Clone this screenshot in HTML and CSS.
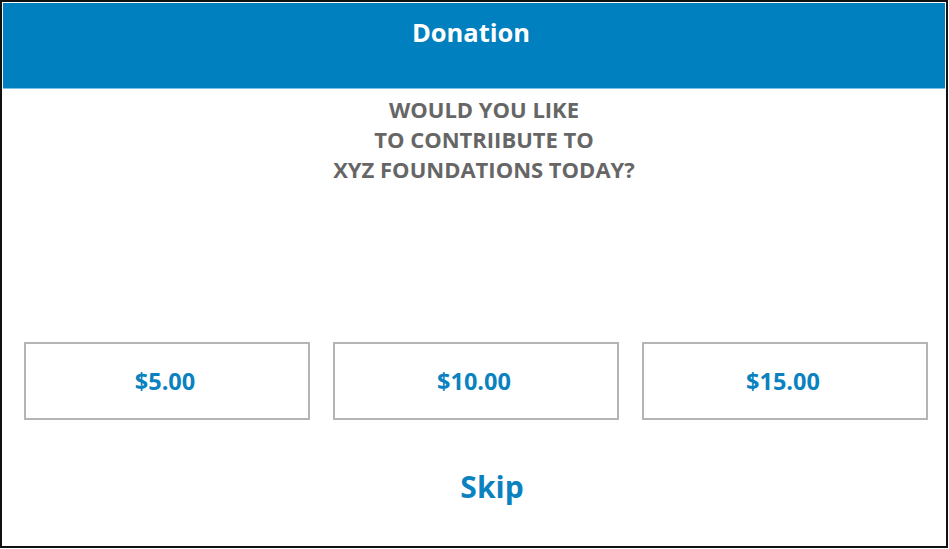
FILE: index.html
```html
<!DOCTYPE html>
<html>
<head>
<meta charset="utf-8">
<link rel="stylesheet" href="styles.css">
</head>
<body>
<div class="frame">
  <div class="screen">
    <header class="header">Donation</header>
    <p class="question">WOULD YOU LIKE<br>TO CONTRIIBUTE TO<br>XYZ FOUNDATIONS TODAY?</p>
    <div class="amounts">
      <button class="amount">$5.00</button>
      <button class="amount">$10.00</button>
      <button class="amount">$15.00</button>
    </div>
    <button class="skip">Skip</button>
  </div>
</div>
</body>
</html>
```

FILE: styles.css
```css
html, body {
  margin: 0;
  padding: 0;
  background: #ffffff;
}
.frame {
  width: 948px;
  height: 548px;
  box-sizing: border-box;
  border: 2px solid #111111;
  padding: 1px;
  background: #ffffff;
}
.screen {
  height: 100%;
  display: flex;
  flex-direction: column;
  font-family: "Open Sans", "Noto Sans", sans-serif;
}
.header {
  height: 85px;
  padding-right: 6px;
  background: #0080be;
  border-bottom: 1px solid #7cc2e6;
  color: #ffffff;
  font-weight: 700;
  font-size: 25.5px;
  text-align: center;
  line-height: 58px;
}
.question {
  margin: 5px 0 0;
  padding-left: 20px;
  text-align: center;
  color: #666666;
  font-weight: 700;
  font-size: 22px;
  line-height: 30px;
}
.amounts {
  margin-top: 158px;
  padding: 0 17px 0 21px;
  display: grid;
  grid-template-columns: 286px 286px 286px;
  column-gap: 23px;
}
.amount {
  height: 78px;
  box-sizing: border-box;
  border: 2px solid #b4b4b4;
  background: #ffffff;
  color: #0a82bf;
  font-family: "Open Sans", "Noto Sans", sans-serif;
  font-weight: 700;
  font-size: 23.5px;
  padding: 0 4px 0 0;
}
.skip {
  align-self: center;
  margin: 46px 0 0 36px;
  border: none;
  background: none;
  padding: 0;
  color: #0a82bf;
  font-family: "Open Sans", "Noto Sans", sans-serif;
  font-weight: 700;
  font-size: 30px;
  line-height: 42px;
}
```
